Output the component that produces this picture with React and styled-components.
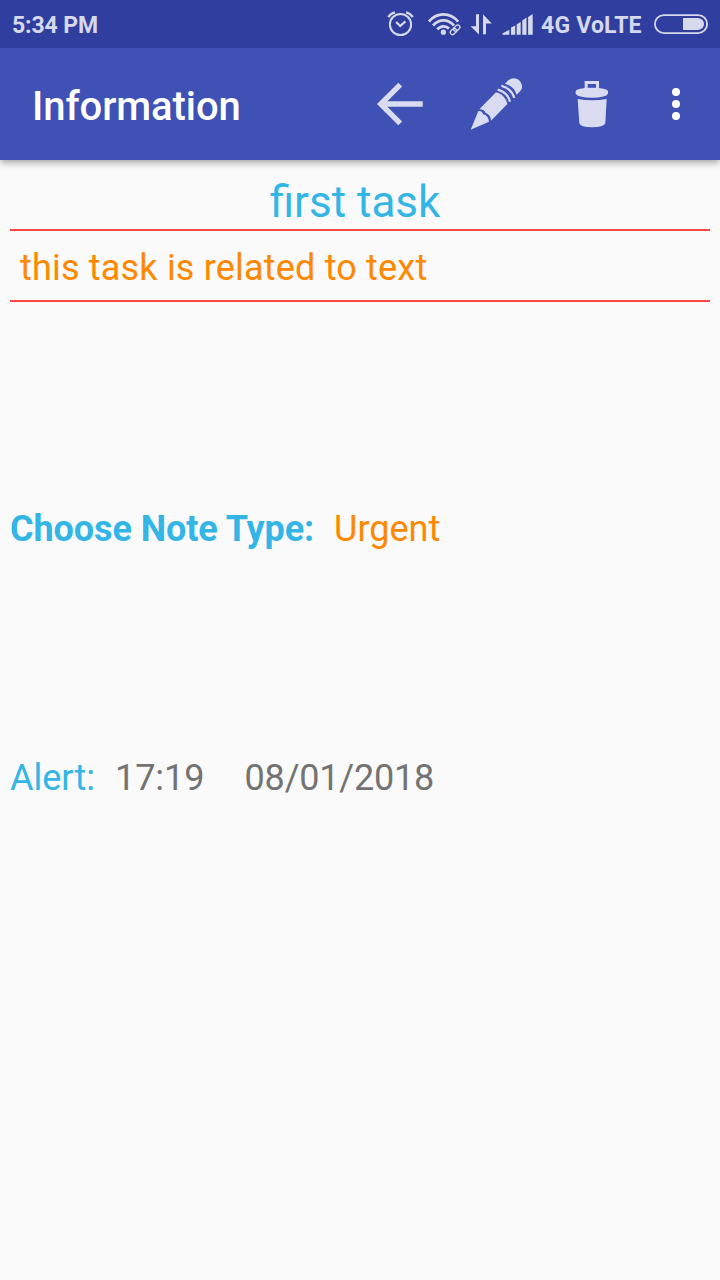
import React from "react";
import styled, { createGlobalStyle } from "styled-components";

const GlobalStyle = createGlobalStyle`
  * { box-sizing: border-box; }
  body { margin: 0; background: #fafafa; font-family: Roboto, sans-serif; }
`;

const Screen = styled.div`
  width: 720px;
  height: 1280px;
  background: #fafafa;
  overflow: hidden;
`;

const StatusBar = styled.header`
  position: relative;
  z-index: 1;
  display: flex;
  align-items: center;
  height: 48px;
  padding: 0 12px;
  background: #303f9f;
  color: #d6d9ec;
  font-size: 23px;
  font-weight: 700;
  line-height: 28px;
`;

const Clock = styled.span`
  flex: 1;
  padding-top: 4px;
  letter-spacing: -0.1px;
`;

const StatusIcon = styled.svg`
  display: block;
  height: 48px;
  width: ${(p) => p.$width}px;
  margin-right: ${(p) => p.$gap || 0}px;
  flex: none;
`;

const Network = styled.span`
  width: 113px;
  padding-top: 4px;
  letter-spacing: 0.2px;
  white-space: nowrap;
`;

const Toolbar = styled.nav`
  display: flex;
  align-items: center;
  height: 112px;
  padding: 0 16px 0 32px;
  background: #3f51b5;
  box-shadow: 0 2px 8px rgba(0, 0, 0, 0.4);
`;

const Title = styled.h1`
  flex: 1;
  margin: 0;
  padding-top: 6px;
  color: #fff;
  font-size: 40px;
  font-weight: 500;
  letter-spacing: -0.06px;
  line-height: 48px;
`;

const Actions = styled.div`
  display: flex;
  margin-right: 8px;
`;

const Action = styled.button`
  display: flex;
  align-items: center;
  justify-content: center;
  width: ${(p) => p.$width || 96}px;
  height: 96px;
  padding: 0;
  border: 0;
  background: none;
  color: ${(p) => p.$color || "#d9dcf0"};
`;

const Content = styled.main`
  padding: 12px 10px 0;
  font-size: 36px;
  line-height: 42px;
`;

const NoteTitle = styled.h2`
  height: 59px;
  margin: 0;
  padding: 4px 10px 0 0;
  border-bottom: 2px solid #ff4444;
  color: #33b5e5;
  font-size: 44px;
  font-weight: 400;
  line-height: 52px;
  text-align: center;
`;

const NoteText = styled.p`
  height: 71px;
  margin: 0;
  padding: 16px 10px 0;
  border-bottom: 2px solid #ff4444;
  color: #ff8800;
  letter-spacing: 0.19px;
`;

const Row = styled.div`
  display: flex;
  margin-top: ${(p) => p.$top}px;
`;

const Label = styled.span`
  margin-right: 20px;
  color: #33b5e5;
  font-weight: ${(p) => (p.$strong ? 700 : 400)};
  letter-spacing: ${(p) => (p.$strong ? "-0.08px" : "normal")};
`;

const Value = styled.span`
  margin-right: 40px;
  color: ${(p) => p.$color || "#737373"};
  letter-spacing: ${(p) => p.$tracking || 0}px;
`;

const AlarmIcon = () => (
  <StatusIcon $width={28} $gap={13} viewBox="387 0 28 48" fill="none" stroke="currentColor" strokeWidth="2">
    <circle cx="400.5" cy="24.5" r="10.6" />
    <path d="M396.2 22l4 4 5.2-4.6" strokeWidth="2.2" />
    <path d="M388.3 17.2q2.2-3.8 6.6-4.9M412.7 17.2q-2.2-3.8-6.6-4.9" strokeWidth="2.3" />
  </StatusIcon>
);

const WifiIcon = () => (
  <StatusIcon $width={34} $gap={8} viewBox="428 0 34 48" fill="none" stroke="currentColor">
    <circle cx="443.4" cy="32.2" r="2.6" fill="currentColor" stroke="none" />
    <path d="M428.9 21.6q6-7.2 14.6-7.2t14.6 7.2" strokeWidth="2.9" />
    <path d="M433.1 25.5q4.3-5.1 10.4-5.1t10.4 5.1" strokeWidth="2.8" />
    <path d="M437.3 29.4q2.7-3.1 6.2-3.1t5.5 2.3" strokeWidth="2.8" />
    <g transform="rotate(-43 455.1 29.8)" strokeWidth="1.3">
      <rect x="449.2" y="27.7" width="7" height="4.4" rx="2.2" />
      <rect x="454" y="27.5" width="7" height="4.4" rx="2.2" />
    </g>
  </StatusIcon>
);

const DataIcon = () => (
  <StatusIcon $width={23} $gap={9} viewBox="470 0 23 48" fill="currentColor">
    <path d="M476 14.3h3v20.2L470.6 26.3H476zM483 34.2h3V23.4h5.8L483 14.2z" />
  </StatusIcon>
);

const SignalIcon = () => (
  <StatusIcon $width={31} $gap={8} viewBox="502 0 31 48" fill="currentColor">
    <path d="M502.4 34.7v-1.2l6.9-3.8v5zM511 34.7v-7.2l4.2-2v9.2zM516.7 34.7V24.3l4-2.4v12.8zM522.3 34.7V20.4l4.2-2.8v17.1zM528.1 34.7V17l4.6-3v20.7z" />
  </StatusIcon>
);

const BatteryIcon = () => (
  <StatusIcon $width={54} viewBox="654 0 54 48" fill="none">
    <rect x="654.9" y="15.1" width="52.2" height="18" rx="9" stroke="currentColor" strokeWidth="1.8" />
    <path d="M683 18h15q6 1 6 6t-6 6h-15z" fill="currentColor" />
  </StatusIcon>
);

const BackIcon = () => (
  <svg width="48" height="48" viewBox="376 80 48 48" fill="none" stroke="currentColor" strokeWidth="5.4">
    <path d="M422.7 104H381M400.2 84.6L380.8 104l19.4 19.4" />
  </svg>
);

const PencilIcon = () => (
  <svg width="56" height="56" viewBox="324 48 168 168" fill="currentColor">
    <path d="M332 209l23-56q11-1 15 10q14 3 17 22z" />
    <path d="M358 148l50-51q28 7 34 35l-49 50q-1-18-16-23q-4-11-19-11z" />
    <path d="M435 71l10-10q12-10 27-4q15 9 14 27q-2 7-8 12l-8 8q-8-25-35-33z" />
    <path d="M413 89q30 8 37 36M424 77q31 9 39 37" fill="none" stroke="currentColor" strokeWidth="6.5" />
  </svg>
);

const TrashIcon = () => (
  <svg width="56" height="56" viewBox="72 48 168 168" fill="currentColor">
    <path d="M134 86V63h43v23h-9V72h-25v14z" />
    <path d="M107 93q3-9 49-10q45 1 48 10v8q-5 11-48 12q-44-1-49-12z" />
    <path d="M113 117q43 8 87 0l-4 73q-5 12-40 12t-38-12z" />
  </svg>
);

const MoreIcon = () => (
  <svg width="8" height="32" viewBox="0 0 8 32" fill="currentColor">
    <circle cx="4" cy="4" r="4" />
    <circle cx="4" cy="16" r="4" />
    <circle cx="4" cy="28" r="4" />
  </svg>
);

export default function App() {
  return (
    <Screen>
      <GlobalStyle />
      <StatusBar>
        <Clock>5:34 PM</Clock>
        <AlarmIcon />
        <WifiIcon />
        <DataIcon />
        <SignalIcon />
        <Network>4G VoLTE</Network>
        <BatteryIcon />
      </StatusBar>
      <Toolbar>
        <Title>Information</Title>
        <Actions>
          <Action aria-label="Back"><BackIcon /></Action>
          <Action aria-label="Edit"><PencilIcon /></Action>
          <Action aria-label="Delete"><TrashIcon /></Action>
        </Actions>
        <Action aria-label="More" $width={56} $color="#fff"><MoreIcon /></Action>
      </Toolbar>
      <Content>
        <NoteTitle>first task</NoteTitle>
        <NoteText>this task is related to text</NoteText>
        <Row $top={206}>
          <Label $strong>Choose Note Type:</Label>
          <Value $color="#ff8800">Urgent</Value>
        </Row>
        <Row $top={207}>
          <Label>Alert:</Label>
          <Value>17:19</Value>
          <Value $tracking={-0.2}>08/01/2018</Value>
        </Row>
      </Content>
    </Screen>
  );
}
